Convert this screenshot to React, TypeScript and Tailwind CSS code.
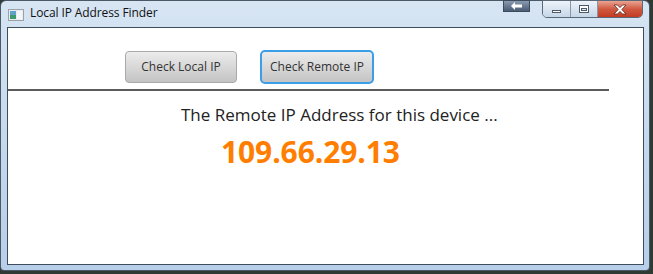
import React from "react";

function AppIcon() {
  return (
    <svg width="16" height="12" viewBox="0 0 16 12">
      <rect x="0.5" y="0.5" width="15" height="11" fill="#e8ecef" stroke="#9aa3ab" />
      <rect x="2" y="2" width="6" height="8" fill="#3e9a6d" />
      <rect x="2" y="2" width="6" height="4" fill="#5fa2c9" />
      <rect x="9" y="2" width="5" height="8" fill="#f4f6f7" />
    </svg>
  );
}

export default function App() {
  return (
    <div
      className="w-[653px] h-[274px] overflow-hidden bg-[#2f3a35] flex flex-col"
      style={{ fontFamily: '"Open Sans", "Noto Sans", sans-serif' }}
    >
      <div className="w-[650px] h-[271px] ml-0 rounded-t-[6px] rounded-b-[4px] border border-[#4b5866] bg-gradient-to-b from-[#d7e5f3] via-[#c5d9ee] to-[#b7cfe9] flex flex-col">
        {/* title bar */}
        <div className="h-[26px] flex items-start">
          <div className="mt-[8px] ml-[7px]">
            <AppIcon />
          </div>
          <div className="ml-[6px] mt-[4px] text-[12px] leading-[16px] text-[#111] tracking-[-0.1px]">
            Local IP Address Finder
          </div>
          <div className="flex-1" />
          <div className="w-[27px] h-[12px] mt-[-1px] border border-[#3d4a5a] bg-gradient-to-b from-[#8a9ab0] to-[#4a5d76] flex items-center justify-center">
            <svg width="12" height="8" viewBox="0 0 12 8">
              <path d="M0 4 L4 0 L4 2.5 L11 2.5 L11 5.5 L4 5.5 L4 8 Z" fill="#ffffff" />
            </svg>
          </div>
          <div className="ml-[12px] mt-[-1px] flex h-[18px] border border-[#5a6878] rounded-b-[5px] overflow-hidden">
            <div className="w-[28px] bg-gradient-to-b from-[#eef3f9] to-[#c6d6e8] border-r border-[#8898ab] flex items-end justify-center pb-[4px]">
              <div className="w-[9px] h-[3px] bg-white border border-[#4e5a68]" />
            </div>
            <div className="w-[27px] bg-gradient-to-b from-[#eef3f9] to-[#c6d6e8] border-r border-[#8898ab] flex items-center justify-center">
              <div className="w-[10px] h-[8px] border border-[#4e5a68] bg-white flex items-center justify-center">
                <div className="w-[6px] h-[3px] border border-[#4e5a68] bg-[#dfe6ee]" />
              </div>
            </div>
            <div className="w-[44px] bg-gradient-to-b from-[#e9a393] via-[#cf5940] to-[#c23b22] flex items-center justify-center">
              <svg width="14" height="11" viewBox="0 0 14 11">
                <path
                  d="M1 1 L4.5 1 L7 3.6 L9.5 1 L13 1 L8.8 5.5 L13 10 L9.5 10 L7 7.4 L4.5 10 L1 10 L5.2 5.5 Z"
                  fill="#ffffff"
                  stroke="#5a2a20"
                  strokeWidth="0.8"
                />
              </svg>
            </div>
          </div>
          <div className="w-[6px]" />
        </div>

        {/* client area */}
        <div className="ml-[6px] mr-[5px] h-[238px] border border-[#3f4c5c] bg-white flex flex-col">
          <div className="h-[61px] flex flex-col">
            <div className="flex mt-[23px] ml-[117px]">
              <button className="w-[112px] h-[32px] rounded-[4px] border border-[#a9a9a9] bg-gradient-to-b from-[#ececec] to-[#c4c4c4] text-[12px] text-[#333] flex items-center justify-center">
                Check Local IP
              </button>
              <button className="ml-[23px] w-[114px] h-[34px] mt-[-1px] rounded-[5px] border-[2px] border-[#3c9ee6] bg-gradient-to-b from-[#ececec] to-[#c4c4c4] text-[12px] text-[#333] flex items-center justify-center">
                Check Remote IP
              </button>
            </div>
          </div>
          <div className="w-[601px] h-[2px] bg-[#5b5b5b]" />
          <div className="ml-[173px] mt-[13px] text-[17px] leading-[22px] text-[#222] tracking-[0px]">
            The Remote IP Address for this device ...
          </div>
          <div className="ml-[213px] mt-[9px] text-[30px] leading-[34px] font-bold text-[#ff7e00] tracking-[-0.1px]">
            109.66.29.13
          </div>
        </div>
      </div>
    </div>
  );
}
